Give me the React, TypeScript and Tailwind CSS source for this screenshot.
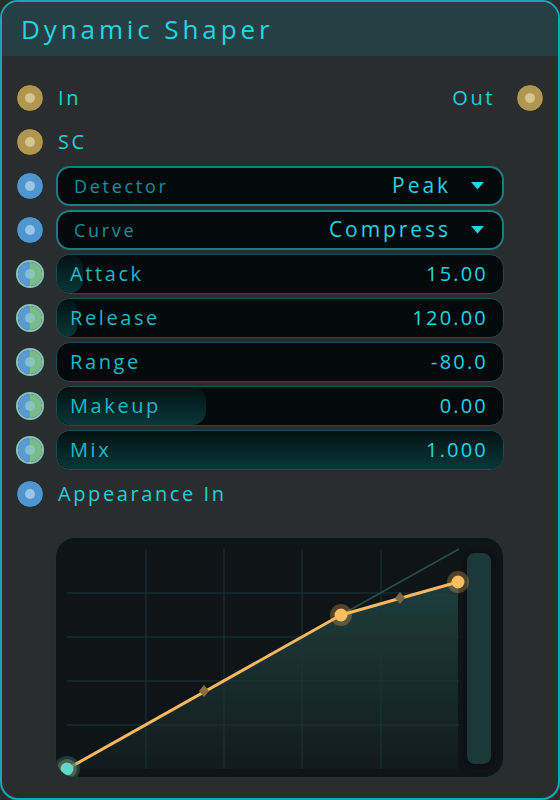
import React from 'react';

type PortKind = 'gold' | 'blue' | 'split';

const FONT = { fontFamily: '"Open Sans", "Noto Sans", sans-serif' };

const Port: React.FC<{ kind: PortKind }> = ({ kind }) => {
  if (kind === 'split') {
    return (
      <div className="relative h-7 w-7 shrink-0 overflow-hidden rounded-full border-2 border-[#86c3c1]">
        <div className="flex h-full w-full">
          <div className="h-full w-1/2 bg-[#5a9bd2]" />
          <div className="h-full w-1/2 bg-[#7bbb8b]" />
        </div>
        <div className="absolute inset-0 m-auto h-2.5 w-2.5 rounded-full bg-[#8cc9c9]/80" />
      </div>
    );
  }
  const outer = kind === 'gold' ? 'bg-[#b09650]' : 'bg-[#4f96cf]';
  const inner = kind === 'gold' ? 'bg-[#d5c590]' : 'bg-[#9cc5e7]';
  return (
    <div className={`relative h-7 w-7 shrink-0 rounded-full border border-[#1e2122] ${outer}`}>
      <div className={`absolute inset-0 m-auto h-2.5 w-2.5 rounded-full ${inner}`} />
    </div>
  );
};

const Dropdown: React.FC<{ label: string; value: string }> = ({ label, value }) => (
  <div className="flex h-10 w-[448px] items-center justify-between rounded-[14px] border-2 border-[#1a7d85] bg-[#04090b] pl-[16px] pr-[18px]">
    <span className="text-[18px] tracking-[0.15em] text-[#1a8f99]">{label}</span>
    <div className="flex items-center gap-[20px]">
      <span className="text-[21px] tracking-[0.14em] text-[#1fd5e4]">{value}</span>
      <svg width="13" height="8" viewBox="0 0 13 8">
        <path d="M0 0 H13 L6.5 7.5 Z" fill="#1fd5e4" />
      </svg>
    </div>
  </div>
);

const Slider: React.FC<{ label: string; value: string; fill: number }> = ({ label, value, fill }) => (
  <div className="relative flex h-10 w-[448px] items-center justify-between overflow-hidden rounded-[14px] border border-[#1b4e54] bg-[#04090b] pl-[13px] pr-[15px]">
    <div
      className="absolute inset-y-0 left-0 rounded-[14px] bg-gradient-to-b from-[#031214] to-[#0a3739]"
      style={{ width: fill }}
    />
    <span className="relative text-[20px] tracking-[0.13em] text-[#1fb8c6]">{label}</span>
    <span className="relative text-[20px] tracking-[0.11em] text-[#1fd5e4]">{value}</span>
  </div>
);

const Graph: React.FC = () => (
  <div className="ml-[53px] mt-[23px] h-[241px] w-[449px] overflow-hidden rounded-[20px] border border-[#1d3536] bg-[#0f1417]">
    <svg width="449" height="241" viewBox="0 0 449 241" className="block">
      <defs>
        <linearGradient id="area" x1="0" y1="0" x2="0" y2="1">
          <stop offset="0" stopColor="#1f3d3d" />
          <stop offset="1" stopColor="#121b1d" />
        </linearGradient>
      </defs>
      <polygon points="11,231 285,77 402,44 402,231" fill="url(#area)" />
      {[90, 168, 246, 325].map((x) => (
        <line key={x} x1={x} y1="11" x2={x} y2="231" stroke="#1d3536" strokeWidth="1" />
      ))}
      {[55, 99, 143, 187].map((y) => (
        <line key={y} x1="11" y1={y} x2="403" y2={y} stroke="#1d3536" strokeWidth="1" />
      ))}
      <line x1="285" y1="77" x2="403" y2="11" stroke="#24504f" strokeWidth="1.5" />
      <rect x="407" y="11" width="33" height="220" rx="12" fill="#0b1114" />
      <rect x="411" y="15" width="24" height="211" rx="8" fill="#1d3838" />
      <polyline
        points="11,231 285,77 402,44"
        fill="none"
        stroke="#f7b85f"
        strokeWidth="3"
        strokeLinejoin="round"
      />
      <path d="M148 147 L153 153 L148 159 L143 153 Z" fill="#8a6e40" />
      <path d="M344 54 L349 60 L344 66 L339 60 Z" fill="#7a6a45" />
      <circle cx="285" cy="77" r="11" fill="#f7b85f" opacity="0.28" />
      <circle cx="285" cy="77" r="6.5" fill="#fbbf62" />
      <circle cx="402" cy="44" r="11" fill="#f7b85f" opacity="0.28" />
      <circle cx="402" cy="44" r="6.5" fill="#fbbf62" />
      <circle cx="11" cy="231" r="13" fill="#3fb5ad" opacity="0.25" />
      <circle cx="11" cy="231" r="10" fill="#6b6a4a" opacity="0.7" />
      <circle cx="11" cy="231" r="6.5" fill="#5ed9c9" />
    </svg>
  </div>
);

export default function App() {
  return (
    <div className="h-[800px] w-[560px] bg-[#2a2d2e]" style={FONT}>
      <div className="flex h-full w-full flex-col overflow-hidden rounded-[18px] border-2 border-[#17a7b2] bg-[#2a2d2e]">
        <div className="flex h-[54px] shrink-0 items-center bg-[#263f42] pl-[19px]">
          <h1 className="text-[26px] tracking-[0.15em] text-[#1ed7e6]">Dynamic Shaper</h1>
        </div>
        <div className="flex flex-col gap-1 pl-[14px] pt-[22px]">
          <div className="flex h-10 items-center pr-[14px]">
            <Port kind="gold" />
            <span className="ml-[14px] text-[20px] tracking-[0.13em] text-[#1fcfde]">In</span>
            <span className="ml-auto mr-[21px] text-[20px] tracking-[0.13em] text-[#1fcfde]">Out</span>
            <Port kind="gold" />
          </div>
          <div className="flex h-10 items-center">
            <Port kind="gold" />
            <span className="ml-[14px] text-[20px] tracking-[0.13em] text-[#1fcfde]">SC</span>
          </div>
          <div className="flex h-10 items-center gap-[12px]">
            <Port kind="blue" />
            <Dropdown label="Detector" value="Peak" />
          </div>
          <div className="flex h-10 items-center gap-[12px]">
            <Port kind="blue" />
            <Dropdown label="Curve" value="Compress" />
          </div>
          <div className="flex h-10 items-center gap-[12px]">
            <Port kind="split" />
            <Slider label="Attack" value="15.00" fill={26} />
          </div>
          <div className="flex h-10 items-center gap-[12px]">
            <Port kind="split" />
            <Slider label="Release" value="120.00" fill={20} />
          </div>
          <div className="flex h-10 items-center gap-[12px]">
            <Port kind="split" />
            <Slider label="Range" value="-80.0" fill={0} />
          </div>
          <div className="flex h-10 items-center gap-[12px]">
            <Port kind="split" />
            <Slider label="Makeup" value="0.00" fill={149} />
          </div>
          <div className="flex h-10 items-center gap-[12px]">
            <Port kind="split" />
            <Slider label="Mix" value="1.000" fill={448} />
          </div>
          <div className="flex h-10 items-center">
            <Port kind="blue" />
            <span className="ml-[14px] text-[20px] tracking-[0.13em] text-[#1fcfde]">Appearance In</span>
          </div>
        </div>
        <Graph />
      </div>
    </div>
  );
}
